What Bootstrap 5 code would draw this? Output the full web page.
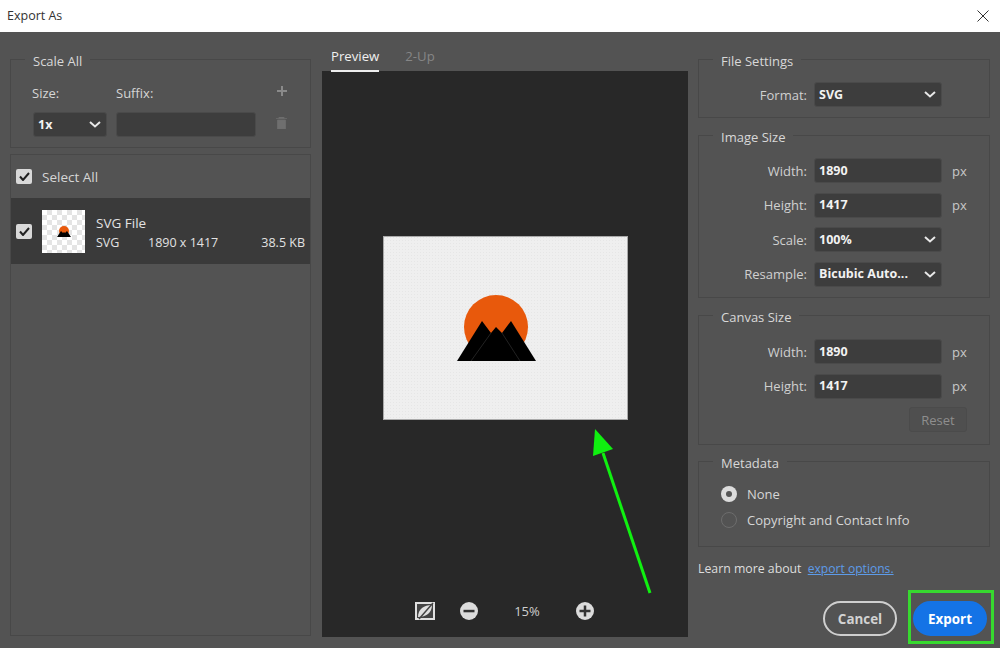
<!doctype html>
<html lang="en"><head><meta charset="utf-8"><title>Export As</title>
<link rel="stylesheet" href="https://cdn.jsdelivr.net/npm/bootstrap@5.3.0/dist/css/bootstrap.min.css">
<style>
html,body{height:648px;overflow:hidden}
body{background:#535353;color:#d6d6d6;font-family:"Open Sans","Noto Sans",sans-serif;font-size:13px;line-height:18px;position:relative}
.ttl{height:32px;background:#fff;color:#333;padding:0 7px;font-size:12.5px}
.shell{height:616px}
.lcol{width:301px;margin-left:10px}
.mcol{width:366px;margin-left:11px}
.rcol{width:292px;margin-left:10px}
.grp{border:1px solid #484848;margin:0;padding:0;min-width:0}
.top1{margin-top:15px}
.gap5{margin-top:5px}
.gap4{margin-top:4px}
.grp legend{float:none;width:auto;font-size:13px;line-height:20px;margin:0 0 0 14px;padding:4px 8px 0;color:#d8d8d8}
.ctl{height:25px;background:#3d3d3d;border:1px solid #4a4a4a;border-radius:3px;color:#f2f2f2;font-weight:700;font-size:12.5px;padding:0 4px;width:128px}
.ctl svg{flex:none;margin-right:1px}
.ctl-size{width:74px}
.ctl-suffix{width:140px;margin-left:9px}
.lb{width:108px;text-align:right;padding-right:7px;flex:none;color:#d0d0d0;margin-left:7px}
.unit{margin-left:10px;color:#c8c8c8}
.frow{margin-bottom:9.6px;height:25px}
.sc1{height:101px}
.lbls{padding:13px 0 0 21px;height:41px}
.ctlrow{padding-left:22px}
.w-size{width:84px}
.tool-plus{margin-left:auto;margin-right:23px;margin-top:2px}
.tool-bin{margin-left:auto;margin-right:23px;margin-top:-3px}
.cbx{width:16px;height:15px;background:#d9d9d9;border-radius:2px;flex:none;color:#222}
.sel-row{height:43px;padding-left:5px;gap:10px}
.sel-text{font-size:13.5px}
.filerow{height:66px;background:#3a3a3a;padding-left:5px}
.list-box{border:1px solid #484848;height:482px;margin-top:6px}
.thumb{width:43px;height:43px;margin:0 11px 0 10px;background-color:#fff;background-image:conic-gradient(#e4e4e4 25%,#fff 0 50%,#e4e4e4 0 75%,#fff 0);background-size:10px 10px;flex:none}
.finfo{flex:1;line-height:19px;color:#e2e2e2;font-size:12.5px;padding:3px 5px 0 0}
.fname{font-size:13.5px}
.ftype{width:52px}
.tabs{height:39px;padding-left:9px;gap:26px}
.tabi{height:39px;padding-top:15px;font-size:13.2px}
.tabi.on{color:#f0f0f0;border-bottom:2px solid #eee;height:40px}
.tabi.off{color:#868686}
.stage{background:#282828;height:566px}
.canvas-area{height:514px}
.pv{width:245px;height:184px;background-color:#efefef;background-image:radial-gradient(#e6e6e6 .6px,transparent .7px);background-size:3px 3px;box-shadow:0 0 0 1px #aaa inset}
.pv-art{margin-right:16px}
.zoombar{height:52px;color:#cfcfcf;padding-left:93px}
.zminus{margin-left:25px}
.zt{width:82px;text-align:center;margin:0 8px}
.reset{width:58px;height:25px;background:#4f4f4f;border:1px solid #4b4b4b;border-radius:3px;color:#8e8e8e;padding:0;font-size:13px;margin-left:210px;margin-top:-1px;display:block}
.rad{width:16px;height:16px;border-radius:50%;flex:none}
.rad.on{background:#dcdcdc}
.rad.on::after{content:"";width:6px;height:6px;border-radius:50%;background:#555}
.rad.off{border:1px solid #6d6d6d}
.mrow{height:26px;padding-left:22px;gap:10px}
.more{margin-top:13px;height:20px;color:#dedede;font-size:12.3px;white-space:nowrap}
.more a{color:#5d9be8;margin-left:3px;font-size:12.1px}
.btns{margin-top:21px;gap:16px;padding-left:125px}
.pill{width:74px;height:35px;border-radius:18px;font-weight:700;font-size:13.4px;padding:1px 0 0;line-height:31px}
.pill.c{background:transparent;border:2px solid #cfcfcf;color:#d2d2d2}
.pill.e{background:#1473e6;border:2px solid #1473e6;color:#fff}
.hl{position:absolute;left:908px;top:590px;width:86px;height:54px;border:3px solid #37d92f;pointer-events:none}
.arrow{position:absolute;left:570px;top:420px}
.h-fs{height:71px}.h-is{height:175px}.h-cs{height:142px}.h-md{height:98px}
.fs-in{margin-top:11px}
.pad8{padding-top:8px}
.pad11{padding-top:11px}
.pad12{padding-top:12px}
</style></head><body>
<div class="ttl d-flex align-items-center justify-content-between"><span>Export As</span>
<svg class="me-1" width="12" height="12" viewBox="0 0 12 12"><path d="M.5.5l11 11M11.500.5l-11 11" stroke="#333" stroke-width="1"/></svg></div>
<div class="shell d-flex">
<div class="lcol">
 <fieldset class="grp sc1 top1">
  <legend>Scale All</legend>
  <div class="d-flex lbls"><span class="w-size">Size:</span><span>Suffix:</span><svg class="tool-plus" width="10" height="10" viewBox="0 0 10 10"><path d="M5 0v10M0 5h10" stroke="#8a8a8a" stroke-width="2"/></svg></div>
  <div class="d-flex align-items-center ctlrow">
   <div class="ctl ctl-size d-flex align-items-center justify-content-between"><span>1x</span><svg width="12" height="7" viewBox="0 0 12 7"><path d="M1 1l5 4.500L11 1" fill="none" stroke="#e8e8e8" stroke-width="2"/></svg></div>
   <div class="ctl ctl-suffix"></div>
   <svg class="tool-bin" width="11" height="12" viewBox="0 0 11 12"><path d="M0 1.500h11M3 1.500V0h5v1.500M1.500 3h8v9h-8z" fill="#6f6f6f" stroke="#6f6f6f" stroke-width=".7"/></svg>
  </div>
 </fieldset>
 <div class="list-box">
  <div class="d-flex align-items-center sel-row"><span class="cbx d-flex align-items-center justify-content-center"><svg width="11" height="9" viewBox="0 0 11 9"><path d="M1 4.500L4 8 10 1" fill="none" stroke="#222" stroke-width="2"/></svg></span><span class="sel-text">Select All</span></div>
  <div class="d-flex align-items-center filerow"><span class="cbx d-flex align-items-center justify-content-center"><svg width="11" height="9" viewBox="0 0 11 9"><path d="M1 4.500L4 8 10 1" fill="none" stroke="#222" stroke-width="2"/></svg></span>
   <div class="thumb d-flex align-items-center justify-content-center"><svg width="14" height="11" viewBox="0 0 14 11"><circle cx="7" cy="5" r="5" fill="#e8590c"/><path d="M0 11L4 5l2 2 1-1 1 1 2-2 4 6z" fill="#000"/></svg></div>
   <div class="finfo"><div class="fname">SVG File</div><div class="d-flex"><span class="ftype">SVG</span><span>1890 x 1417</span><span class="ms-auto">38.5 KB</span></div></div>
  </div>
 </div>
</div>
<div class="mcol">
 <div class="tabs d-flex"><div class="tabi on">Preview</div><div class="tabi off">2-Up</div></div>
 <div class="stage">
  <div class="canvas-area d-flex align-items-center justify-content-center">
   <div class="pv d-flex align-items-center justify-content-center"><svg class="pv-art" width="80" height="66" viewBox="0 0 80 66"><circle cx="39" cy="32" r="32" fill="#e8590c"/><path d="M0 66L25 26 34 38 39 32 45 38 54 26 79 66z" fill="#000"/><path d="M14 66L34 38M63 66L45 38" stroke="#222" stroke-width="1" fill="none"/></svg></div>
  </div>
  <div class="zoombar d-flex align-items-center">
   <svg width="20" height="18" viewBox="0 0 20 18"><rect width="20" height="18" fill="#e0e0e0"/><rect x="2" y="2" width="16" height="14" fill="#444"/><path d="M3 15C3 7 9 3 17 3 17 11 11 15 3 15z" fill="#e0e0e0"/><path d="M4 17L18 1" stroke="#444" stroke-width="1.500"/></svg>
   <svg class="zminus" width="18" height="18" viewBox="0 0 18 18"><circle cx="9" cy="9" r="9" fill="#dcdcdc"/><rect x="3.500" y="7.800" width="11" height="2.500" fill="#333"/></svg>
   <span class="zt">15%</span>
   <svg width="18" height="18" viewBox="0 0 18 18"><circle cx="9" cy="9" r="9" fill="#dcdcdc"/><path d="M3.500 9h11M9 3.500v11" stroke="#333" stroke-width="2.500"/></svg>
  </div>
 </div>
</div>
<div class="rcol">
 <fieldset class="grp top1 h-fs"><legend>File Settings</legend>
  <div class="d-flex align-items-center fs-in"><span class="lb">Format:</span><div class="ctl d-flex align-items-center justify-content-between"><span>SVG</span><svg width="12" height="7" viewBox="0 0 12 7"><path d="M1 1l5 4.500L11 1" fill="none" stroke="#e8e8e8" stroke-width="2"/></svg></div></div>
 </fieldset>
 <fieldset class="grp gap5 h-is"><legend>Image Size</legend>
  <div class="pad11">
  <div class="d-flex align-items-center frow"><span class="lb">Width:</span><div class="ctl d-flex align-items-center">1890</div><span class="unit">px</span></div>
  <div class="d-flex align-items-center frow"><span class="lb">Height:</span><div class="ctl d-flex align-items-center">1417</div><span class="unit">px</span></div>
  <div class="d-flex align-items-center frow"><span class="lb">Scale:</span><div class="ctl d-flex align-items-center justify-content-between"><span>100%</span><svg width="12" height="7" viewBox="0 0 12 7"><path d="M1 1l5 4.500L11 1" fill="none" stroke="#e8e8e8" stroke-width="2"/></svg></div></div>
  <div class="d-flex align-items-center frow"><span class="lb">Resample:</span><div class="ctl d-flex align-items-center justify-content-between"><span>Bicubic Auto...</span><svg width="12" height="7" viewBox="0 0 12 7"><path d="M1 1l5 4.500L11 1" fill="none" stroke="#e8e8e8" stroke-width="2"/></svg></div></div>
  </div>
 </fieldset>
 <fieldset class="grp gap5 h-cs"><legend>Canvas Size</legend>
  <div class="pad12">
  <div class="d-flex align-items-center frow"><span class="lb">Width:</span><div class="ctl d-flex align-items-center">1890</div><span class="unit">px</span></div>
  <div class="d-flex align-items-center frow"><span class="lb">Height:</span><div class="ctl d-flex align-items-center">1417</div><span class="unit">px</span></div>
  <button class="reset" type="button">Reset</button>
  </div>
 </fieldset>
 <fieldset class="grp gap4 h-md"><legend>Metadata</legend>
  <div class="pad8">
  <div class="d-flex align-items-center mrow"><span class="rad on d-flex align-items-center justify-content-center"></span><span>None</span></div>
  <div class="d-flex align-items-center mrow"><span class="rad off"></span><span>Copyright and Contact Info</span></div>
  </div>
 </fieldset>
 <div class="more">Learn more about <a href="#">export options.</a></div>
 <div class="d-flex btns"><button class="pill c" type="button">Cancel</button><button class="pill e" type="button">Export</button></div>
</div>
</div>
<div class="hl"></div>
<svg class="arrow" width="90" height="180" viewBox="0 0 90 180"><path d="M80 173L33 33" stroke="#10f010" stroke-width="3" fill="none"/><path d="M25 9L43 29 23 36z" fill="#10f010"/></svg>
<script src="https://cdn.jsdelivr.net/npm/bootstrap@5.3.0/dist/js/bootstrap.bundle.min.js"></script>
</body></html>
